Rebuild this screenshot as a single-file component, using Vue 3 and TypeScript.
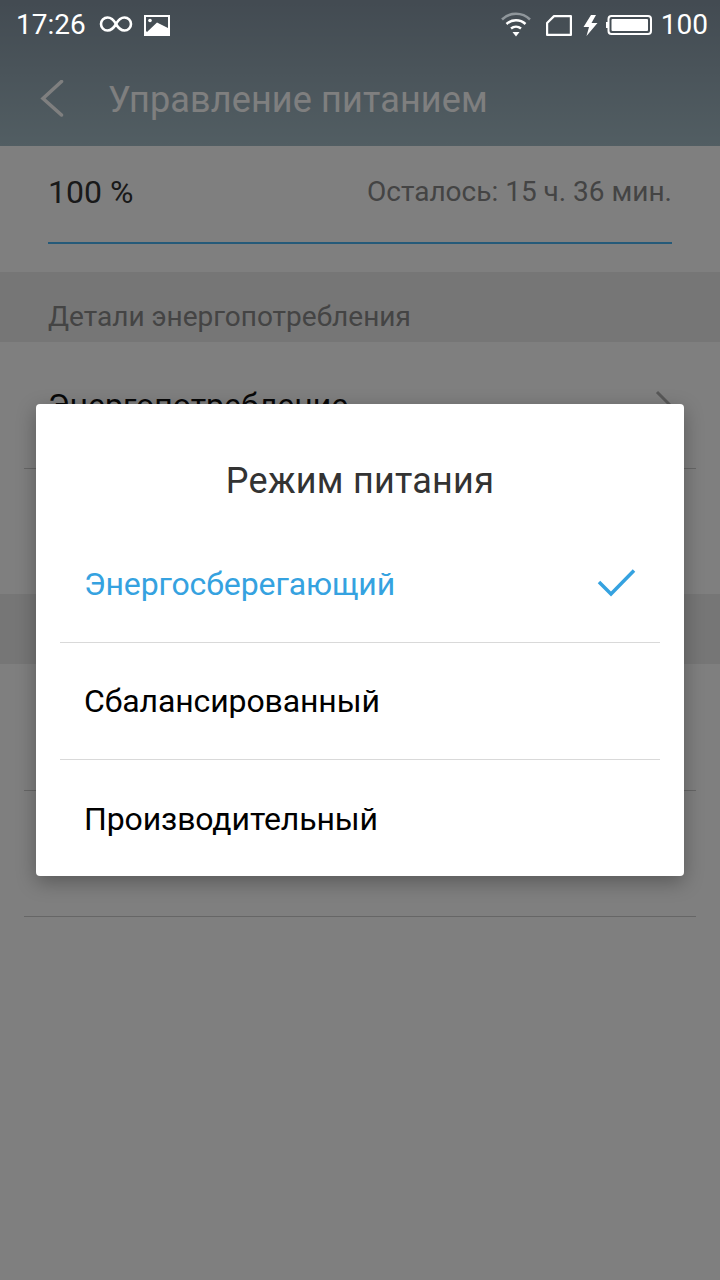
<script setup lang="ts">
const options = [
  { label: "Энергосберегающий", active: true },
  { label: "Сбалансированный", active: false },
  { label: "Производительный", active: false },
];
</script>

<template>
  <div class="phone">
    <div class="page">
      <header class="appbar">
        <div class="titlebar">
          <svg class="back" width="26" height="40" viewBox="0 0 26 40">
            <path d="M22.500 1.500 L4 18.500 L22.500 35" fill="none" stroke="#fff" stroke-width="3.500" stroke-linecap="round" />
          </svg>
          <span class="title">Управление питанием</span>
        </div>
      </header>

      <section class="battery">
        <div class="battery-line">
          <span class="percent">100 %</span>
          <span class="remain">Осталось: 15 ч. 36 мин.</span>
        </div>
      </section>

      <div class="section-head">Детали энергопотребления</div>
      <div class="row">
        <span class="row-label">Энергопотребление</span>
        <svg class="chevron" width="17" height="30" viewBox="0 0 17 30">
          <path d="M2 2 L15 15 L2 28" fill="none" stroke="#b0b0b0" stroke-width="3" />
        </svg>
      </div>
      <div class="row plain"></div>
      <div class="section-head"></div>
      <div class="row"></div>
      <div class="row"></div>
    </div>

    <div class="dim"></div>

    <div class="statusbar">
      <div class="status-left">
        <span class="clock">17:26</span>
        <svg class="ic-inf" width="34" height="20" viewBox="0 0 34 20">
          <path
            d="M17 10 C14.500 5.500 12 3.500 8.500 3.500 A6.500 6.500 0 0 0 8.500 16.500 C12 16.500 14.500 14.500 17 10 C19.500 5.500 22 3.500 25.500 3.500 A6.500 6.500 0 0 1 25.500 16.500 C22 16.500 19.500 14.500 17 10 Z"
            fill="none"
            stroke="#fff"
            stroke-width="2.600"
          />
        </svg>
        <svg class="ic-img" width="26" height="21" viewBox="0 0 26 21">
          <path
            fill="#fff"
            fill-rule="evenodd"
            d="M0 0H26V21H0Z M2 2H24V13L13 7.500L3 17L2 16Z"
          />
          <circle cx="6" cy="5.500" r="1.800" fill="#fff" />
        </svg>
      </div>
      <div class="status-right">
        <svg class="ic-wifi" width="32" height="26" viewBox="0 0 32 26">
          <path d="M2 8.500 A20 20 0 0 1 30 8.500" fill="none" stroke="#8f969b" stroke-width="2.500" />
          <path d="M6.500 13 A14 14 0 0 1 25.500 13" fill="none" stroke="#fff" stroke-width="2.500" />
          <path d="M11 17.500 A8 8 0 0 1 21 17.500" fill="none" stroke="#fff" stroke-width="2.500" />
          <path d="M12.500 21 L19.500 21 L16 25.500 Z" fill="#fff" />
        </svg>
        <svg class="ic-sim" width="26" height="21" viewBox="0 0 26 21">
          <path d="M8 1.100 H24.900 V19.900 H1.100 V8 Z" fill="none" stroke="#fff" stroke-width="2.200" stroke-linejoin="round" />
        </svg>
        <svg class="ic-bolt" width="15" height="21" viewBox="0 0 15 21">
          <path d="M8 0 L0.500 12 H6 L3.500 21 L14.500 8 H8.500 L13 0 Z" fill="#fff" />
        </svg>
        <svg class="ic-batt" width="46" height="22" viewBox="0 0 46 22">
          <rect x="0" y="8" width="2" height="6" fill="#fff" />
          <rect x="2.500" y="2" width="42.500" height="18" rx="3" fill="none" stroke="#fff" stroke-width="2" />
          <rect x="5.500" y="5" width="36.500" height="12" rx="1" fill="#fff" />
        </svg>
        <span class="level">100</span>
      </div>
    </div>

    <div class="dialog">
      <div class="dialog-title">Режим питания</div>
      <div
        v-for="opt in options"
        :key="opt.label"
        class="option"
        :class="{ active: opt.active }"
      >
        <span>{{ opt.label }}</span>
        <svg v-if="opt.active" width="40" height="30" viewBox="0 0 40 30">
          <path d="M2 13 L14 25 L37 1.500" fill="none" stroke="#35a2e0" stroke-width="3.500" />
        </svg>
      </div>
    </div>
  </div>
</template>

<style scoped>
.phone {
  position: relative;
  width: 720px;
  height: 1280px;
  overflow: hidden;
  font-family: Roboto, "Noto Sans", sans-serif;
}

.page {
  height: 100%;
  background: #fff;
}

.appbar {
  height: 146px;
  padding-top: 54px;
  box-sizing: border-box;
  background: linear-gradient(#8696a4, #a4bcc6);
}

.titlebar {
  height: 92px;
  display: flex;
  align-items: center;
  padding-left: 39px;
}

.title {
  margin-left: 43px;
  font-size: 36px;
  color: #fff;
  letter-spacing: 0.15px;
}

.battery {
  height: 126px;
  padding: 0 48px;
  box-sizing: border-box;
}

.battery-line {
  height: 98px;
  padding-bottom: 5px;
  box-sizing: border-box;
  display: flex;
  justify-content: space-between;
  align-items: center;
  border-bottom: 2px solid #4ab4f2;
}

.percent {
  font-size: 32px;
  color: #333;
}

.remain {
  font-size: 28px;
  color: #888;
}

.section-head {
  height: 70px;
  padding: 18px 48px 0;
  box-sizing: border-box;
  display: flex;
  align-items: center;
  background: #ececec;
  font-size: 28px;
  color: #888;
}

.row {
  position: relative;
  height: 126px;
  padding: 0 48px;
  display: flex;
  justify-content: space-between;
  align-items: center;
}

.row::after {
  content: "";
  position: absolute;
  left: 24px;
  right: 24px;
  bottom: -1px;
  height: 1px;
  background: #ccc;
}

.row.plain::after {
  display: none;
}

.row-label {
  font-size: 32px;
  color: #111;
}

.dim {
  position: absolute;
  inset: 0;
  background: rgba(0, 0, 0, 0.5);
}

.statusbar {
  position: absolute;
  left: 0;
  right: 0;
  top: 0;
  height: 48px;
  padding: 0 12px 0 16px;
  display: flex;
  justify-content: space-between;
  align-items: center;
  color: #fff;
  font-size: 28px;
}

.status-left,
.status-right {
  display: flex;
  align-items: center;
}

.ic-inf {
  margin-left: 13px;
}

.ic-img {
  margin: 3px 0 0 11px;
}

.ic-sim {
  margin: 3px 0 0 14px;
}

.ic-bolt {
  margin: 3px 0 0 11px;
}

.ic-batt {
  margin: 2px 0 0 8px;
}

.level {
  margin-left: 9px;
}

.dialog {
  position: absolute;
  left: 36px;
  top: 404px;
  width: 648px;
  height: 472px;
  padding: 0 24px;
  box-sizing: border-box;
  background: #fff;
  border-radius: 4px;
  box-shadow: 0 6px 20px rgba(0, 0, 0, 0.3);
}

.dialog-title {
  height: 122px;
  padding-top: 54px;
  box-sizing: border-box;
  text-align: center;
  font-size: 36px;
  line-height: 46px;
  color: #333;
  letter-spacing: 0.25px;
}

.option {
  height: 117px;
  padding: 0 23px 0 24px;
  box-sizing: border-box;
  display: flex;
  justify-content: space-between;
  align-items: center;
  font-size: 32px;
  letter-spacing: -0.12px;
  color: #000;
  border-bottom: 1px solid #d9d9d9;
}

.option:last-child {
  border-bottom: none;
}

.option.active {
  color: #35a2e0;
}
</style>
